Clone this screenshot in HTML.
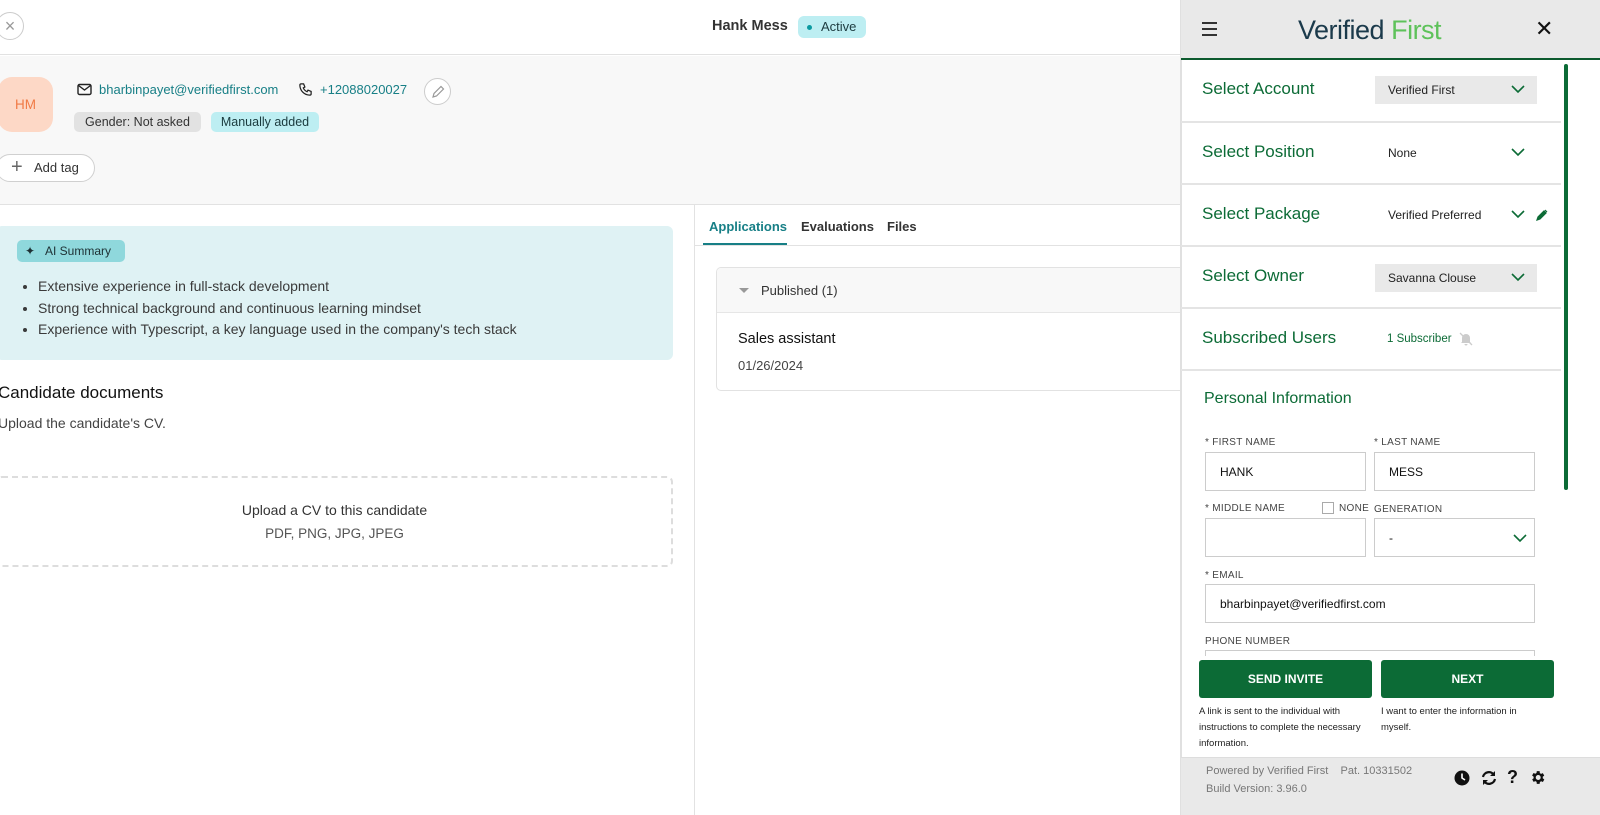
<!DOCTYPE html>
<html><head><meta charset="utf-8"><style>
*{box-sizing:border-box;margin:0;padding:0}
body{width:1600px;height:815px;overflow:hidden;background:#fff;font-family:"Liberation Sans",sans-serif;position:relative;color:#222}
.a{position:absolute}
.pf{font-family:"Liberation Sans",sans-serif}
.g{color:#0c6b36}
.lbl{font-size:10px;color:#444;letter-spacing:.3px}
.inp{border:1px solid #ccc;background:#fff;font-size:12px;color:#111;padding-left:14px;display:flex;align-items:center}
.row{position:absolute;left:1181px;width:380px;border-bottom:2px solid #e4e4e4}
.rt{position:absolute;left:21px;font-size:17px;color:#0c6b36}
.sel{position:absolute;left:194px;width:162px;height:28px;font-size:12px;color:#222;padding-left:13px;display:flex;align-items:center}
.chev{position:absolute;right:12px;top:8px}
</style></head><body>
<div class="a" style="left:0;top:0;width:1180px;height:55px;border-bottom:1px solid #e2e2e2;background:#fff"></div>
<div class="a" style="left:-4px;top:12px;width:28px;height:28px;border:1px solid #ccc;border-radius:50%;text-align:center;line-height:26px;color:#999;font-size:18px">×</div>
<div class="a pf" style="left:712px;top:18px;font-size:14.5px;color:#333;font-weight:bold">Hank Mess</div>
<div class="a pf" style="left:798px;top:16px;width:68px;height:22px;background:#bdeef2;border-radius:6px;font-size:13px;color:#1d3b3f;line-height:22px;padding-left:23px">Active<span class="a" style="left:9px;top:9px;width:5px;height:5px;border-radius:50%;background:#0a9aa0"></span></div>
<div class="a" style="left:0;top:56px;width:1180px;height:149px;background:#f8f8f8;border-bottom:1px solid #e2e2e2"></div>
<div class="a pf" style="left:-2px;top:77px;width:55px;height:55px;background:#fdd8c6;border-radius:14px;color:#f07a45;font-size:13.5px;text-align:center;line-height:55px">HM</div>
<svg class="a" style="left:77px;top:83px" width="15" height="13" viewBox="0 0 15 13"><rect x="1" y="1.5" width="13" height="10" rx="1.5" fill="none" stroke="#222" stroke-width="1.4"/><path d="M1.5 2.5l6 4.5 6-4.5" fill="none" stroke="#222" stroke-width="1.4"/></svg>
<div class="a pf" style="left:99px;top:82px;font-size:13px;color:#177f86">bharbinpayet@verifiedfirst.com</div>
<svg class="a" style="left:298px;top:82px" width="15" height="15" viewBox="0 0 24 24"><path d="M5 3h4l2 5-2.5 1.5a11 11 0 0 0 6 6L16 13l5 2v4a2 2 0 0 1-2 2A16 16 0 0 1 3 5a2 2 0 0 1 2-2" fill="none" stroke="#222" stroke-width="2"/></svg>
<div class="a pf" style="left:320px;top:82px;font-size:13px;color:#177f86">+12088020027</div>
<div class="a" style="left:424px;top:78px;width:27px;height:27px;border:1px solid #ccc;border-radius:50%;background:#fff"><svg class="a" style="left:6px;top:6px" width="14" height="14" viewBox="0 0 14 14"><path d="M2 12l1-3.5 7-7 2.5 2.5-7 7z" fill="none" stroke="#999" stroke-width="1.2"/></svg></div>
<div class="a pf" style="left:74px;top:112px;height:20px;width:127px;background:#e2e2e2;border-radius:5px;font-size:12.5px;color:#333;line-height:20px;text-align:center">Gender: Not asked</div>
<div class="a pf" style="left:211px;top:112px;height:20px;width:108px;background:#bdeef2;border-radius:5px;font-size:12.5px;color:#1a3a3d;line-height:20px;text-align:center">Manually added</div>
<div class="a pf" style="left:-4px;top:154px;width:99px;height:28px;background:#fff;border:1px solid #d0d0d0;border-radius:14px;font-size:13px;color:#333;line-height:26px;padding-left:37px">Add tag<span class="a" style="left:14px;top:-1px;font-size:20px;color:#666">+</span></div>
<div class="a" style="left:694px;top:205px;width:1px;height:610px;background:#e2e2e2"></div>
<div class="a" style="left:-4px;top:226px;width:677px;height:134px;background:#dff2f4;border-radius:6px"></div>
<div class="a pf" style="left:17px;top:240px;width:108px;height:22px;background:#8fd8dc;border-radius:5px;font-size:12px;color:#1d3033;line-height:22px;padding-left:28px">AI Summary<span class="a" style="left:8px;top:0;font-size:12px">✦</span></div>
<ul class="a pf" style="left:38px;top:276px;font-size:14px;color:#3a3a3a;line-height:21.5px;list-style:disc;margin:0;padding-left:0"><li>Extensive experience in full-stack development</li><li>Strong technical background and continuous learning mindset</li><li>Experience with Typescript, a key language used in the company's tech stack</li></ul>
<div class="a pf" style="left:-2px;top:383px;font-size:17px;color:#111">Candidate documents</div>
<div class="a pf" style="left:-2px;top:415px;font-size:14px;color:#444">Upload the candidate's CV.</div>
<div class="a" style="left:-4px;top:476px;width:677px;height:91px;border:2px dashed #ddd;border-radius:6px"></div>
<div class="a pf" style="left:0;top:502px;width:669px;text-align:center;font-size:14px;color:#333">Upload a CV to this candidate</div>
<div class="a pf" style="left:0;top:526px;width:669px;text-align:center;font-size:13.5px;color:#555">PDF, PNG, JPG, JPEG</div>
<div class="a" style="left:695px;top:245px;width:485px;height:1px;background:#e2e2e2"></div>
<div class="a pf" style="left:709px;top:219px;font-size:13px;color:#177f86;font-weight:bold">Applications</div>
<div class="a" style="left:703px;top:243px;width:84px;height:2px;background:#177f86"></div>
<div class="a pf" style="left:801px;top:219px;font-size:13px;color:#333;font-weight:bold">Evaluations</div>
<div class="a pf" style="left:887px;top:219px;font-size:13px;color:#333;font-weight:bold">Files</div>
<div class="a" style="left:716px;top:267px;width:480px;height:124px;border:1px solid #e2e2e2;border-radius:5px;background:#fff;overflow:hidden"><div style="height:45px;background:#f8f8f8;border-bottom:1px solid #e6e6e6"></div></div>
<div class="a" style="left:739px;top:288px;width:0;height:0;border-left:5px solid transparent;border-right:5px solid transparent;border-top:5px solid #999"></div>
<div class="a pf" style="left:761px;top:283px;font-size:13px;color:#333">Published (1)</div>
<div class="a pf" style="left:738px;top:331px;font-size:14.5px;color:#111">Sales assistant</div>
<div class="a pf" style="left:738px;top:358px;font-size:13px;color:#444">01/26/2024</div>
<div class="a" style="left:1180px;top:0;width:420px;height:815px;background:#fff;border-left:2px solid #e0e0e0"></div>
<div class="a" style="left:1181px;top:0;width:419px;height:60px;background:#e9e9e9;border-bottom:2px solid #0c5a2e"></div>
<div class="a" style="left:1202px;top:22px;width:15px;height:2px;background:#333;box-shadow:0 6px 0 #333,0 12px 0 #333"></div>
<div class="a" style="left:1298px;top:15px;font-size:27px;letter-spacing:-.5px"><span style="color:#1b3a4b">Verified</span> <span style="color:#5ec25a">First</span></div>
<div class="a" style="left:1535px;top:16px;font-size:22px;color:#111">✕</div>
<div class="a" style="left:1564px;top:64px;width:4px;height:426px;background:#0c6b36;border-radius:2px"></div>
<div class="row" style="top:60px;height:63px"><div class="rt" style="top:19px">Select Account</div><div class="sel" style="top:16px;background:#e9e9e9">Verified First<svg class="chev" width="14" height="10" viewBox="0 0 14 10"><path d="M1 2l6 6 6-6" fill="none" stroke="#0c6b36" stroke-width="1.6"/></svg></div></div>
<div class="row" style="top:123px;height:62px"><div class="rt" style="top:19px">Select Position</div><div class="sel" style="top:16px">None<svg class="chev" width="14" height="10" viewBox="0 0 14 10"><path d="M1 2l6 6 6-6" fill="none" stroke="#0c6b36" stroke-width="1.6"/></svg></div></div>
<div class="row" style="top:185px;height:62px"><div class="rt" style="top:19px">Select Package</div><div class="sel" style="top:16px">Verified Preferred<svg class="chev" width="14" height="10" viewBox="0 0 14 10"><path d="M1 2l6 6 6-6" fill="none" stroke="#0c6b36" stroke-width="1.6"/></svg></div><svg class="a" style="left:355px;top:24px" width="12" height="12" viewBox="0 0 12 12"><path d="M1 11l1-3 6-6 2 2-6 6z M9 1l2 2" fill="#0c6b36" stroke="#0c6b36" stroke-width="1.2"/></svg></div>
<div class="row" style="top:247px;height:62px"><div class="rt" style="top:19px">Select Owner</div><div class="sel" style="top:17px;background:#e9e9e9">Savanna Clouse<svg class="chev" width="14" height="10" viewBox="0 0 14 10"><path d="M1 2l6 6 6-6" fill="none" stroke="#0c6b36" stroke-width="1.6"/></svg></div></div>
<div class="row" style="top:309px;height:62px"><div class="rt" style="top:19px">Subscribed Users</div><div class="a g" style="left:206px;top:24px;font-size:11.5px">1 Subscriber</div><svg class="a" style="left:277px;top:22px" width="16" height="16" viewBox="0 0 16 16"><path d="M4 11V7a4 4 0 0 1 8 0v4l1 1H3z M6.5 13a1.5 1.5 0 0 0 3 0" fill="#ccc"/><path d="M2 2l12 12" stroke="#ccc" stroke-width="1.3"/></svg></div>
<div class="a g" style="left:1204px;top:390px;font-size:16px">Personal Information</div>
<div class="a lbl" style="left:1205px;top:437px">* FIRST NAME</div>
<div class="a lbl" style="left:1374px;top:437px">* LAST NAME</div>
<div class="a inp" style="left:1205px;top:452px;width:161px;height:39px">HANK</div>
<div class="a inp" style="left:1374px;top:452px;width:161px;height:39px">MESS</div>
<div class="a lbl" style="left:1205px;top:503px">* MIDDLE NAME</div>
<div class="a" style="left:1322px;top:502px;width:12px;height:12px;border:1px solid #aaa"></div>
<div class="a lbl" style="left:1339px;top:503px">NONE</div>
<div class="a lbl" style="left:1374px;top:504px">GENERATION</div>
<div class="a inp" style="left:1205px;top:518px;width:161px;height:39px"></div>
<div class="a inp" style="left:1374px;top:518px;width:161px;height:39px">-<svg class="a" style="right:7px;top:14px" width="14" height="10" viewBox="0 0 14 10"><path d="M1 2l6 6 6-6" fill="none" stroke="#0c6b36" stroke-width="1.6"/></svg></div>
<div class="a lbl" style="left:1205px;top:570px">* EMAIL</div>
<div class="a inp" style="left:1205px;top:584px;width:330px;height:39px">bharbinpayet@verifiedfirst.com</div>
<div class="a lbl" style="left:1205px;top:636px">PHONE NUMBER</div>
<div class="a" style="left:1205px;top:650px;width:330px;height:6px;border:1px solid #ccc;border-bottom:none"></div>
<div class="a" style="left:1199px;top:660px;width:173px;height:38px;background:#0c6b36;border-radius:3px;color:#fff;font-size:12px;font-weight:bold;text-align:center;line-height:38px">SEND INVITE</div>
<div class="a" style="left:1381px;top:660px;width:173px;height:38px;background:#0c6b36;border-radius:3px;color:#fff;font-size:12px;font-weight:bold;text-align:center;line-height:38px">NEXT</div>
<div class="a" style="left:1199px;top:704px;width:178px;font-size:9.5px;line-height:16px;color:#222">A link is sent to the individual with instructions to complete the necessary information.</div>
<div class="a" style="left:1381px;top:704px;width:150px;font-size:9.5px;line-height:16px;color:#222">I want to enter the information in myself.</div>
<div class="a" style="left:1181px;top:757px;width:419px;height:58px;background:#e9e9e9;border-top:1px solid #ddd"></div>
<div class="a" style="left:1206px;top:765px;font-size:11px;color:#777">Powered by Verified First &nbsp;&nbsp; Pat. 10331502</div>
<div class="a" style="left:1206px;top:783px;font-size:11px;color:#777">Build Version: 3.96.0</div>
<svg class="a" style="left:1454px;top:770px" width="16" height="16" viewBox="0 0 16 16"><circle cx="8" cy="8" r="7.5" fill="#111"/><path d="M8 3.5V8l3 2" stroke="#fff" stroke-width="1.6" fill="none"/></svg>
<svg class="a" style="left:1480px;top:770px" width="18" height="16" viewBox="0 0 18 16"><path d="M3 7a6 6 0 0 1 11-2M15 9a6 6 0 0 1-11 2" fill="none" stroke="#111" stroke-width="2.2"/><path d="M15 1v5h-5zM3 15v-5h5z" fill="#111"/></svg>
<div class="a" style="left:1507px;top:767px;font-size:18px;font-weight:bold;color:#111">?</div>
<svg class="a" style="left:1529px;top:769px" width="17" height="17" viewBox="0 0 24 24"><path fill="#111" d="M19.4 13a7.5 7.5 0 0 0 0-2l2.1-1.6-2-3.5-2.5 1a7.6 7.6 0 0 0-1.7-1L15 3h-4l-.4 2.7a7.6 7.6 0 0 0-1.7 1l-2.5-1-2 3.5L6.6 11a7.5 7.5 0 0 0 0 2l-2.1 1.6 2 3.5 2.5-1a7.6 7.6 0 0 0 1.7 1L11 21h4l.4-2.7a7.6 7.6 0 0 0 1.7-1l2.5 1 2-3.5zM13 15.5a3.5 3.5 0 1 1 0-7 3.5 3.5 0 0 1 0 7z"/></svg>
</body></html>
